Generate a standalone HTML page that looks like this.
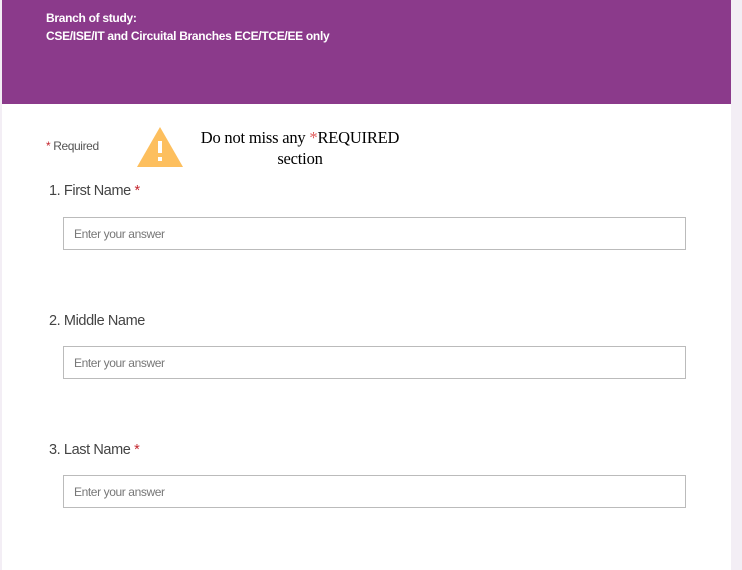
<!DOCTYPE html>
<html><head><style>
body{margin:0;width:742px;height:570px;background:#f3eef5;position:relative;overflow:hidden;font-family:"Liberation Sans",sans-serif}
.card{position:absolute;left:2px;top:0;width:729px;height:570px;background:#fff}
.hdr{position:absolute;left:2px;top:0;width:729px;height:104px;background:#8b3a8b;color:#fff;font-size:12px;font-weight:bold;letter-spacing:-0.3px}
.hdr div{position:absolute;left:44px}
.lbl{position:absolute;left:49px;font-size:14.5px;color:#444;letter-spacing:-0.4px}
.star{color:#c4262e}
.in{position:absolute;left:63px;width:621px;height:31px;border:1px solid #bbb;box-sizing:content-box}
.in span{position:absolute;left:10px;top:9px;font-size:12px;color:#777;letter-spacing:-0.4px}
.note{position:absolute;left:180px;top:127px;width:240px;text-align:center;font-family:"Liberation Serif",serif;font-size:16.5px;line-height:21px;color:#000;letter-spacing:-0.2px}
</style></head><body>
<div class="card"></div>
<div class="hdr"><div style="top:11px">Branch of study:</div><div style="top:29px">CSE/ISE/IT and Circuital Branches ECE/TCE/EE only</div></div>
<div style="position:absolute;left:46px;top:139px;font-size:12px;color:#555;letter-spacing:-0.4px"><span class="star">*</span> Required</div>
<svg style="position:absolute;left:136px;top:126px" width="48" height="42" viewBox="0 0 48 42"><polygon points="24,1 47,41 1,41" fill="#fdbf5e"/><rect x="22" y="15" width="4" height="12" fill="#fff"/><rect x="22" y="31" width="4" height="4" fill="#fff"/></svg>
<div class="note">Do not miss any <span style="color:#e05a5a">*</span>REQUIRED<br>section</div>
<div class="lbl" style="top:183px">1. First Name <span class="star">*</span></div>
<div class="in" style="top:217px"><span>Enter your answer</span></div>
<div class="lbl" style="top:313px">2. Middle Name</div>
<div class="in" style="top:346px"><span>Enter your answer</span></div>
<div class="lbl" style="top:442px">3. Last Name <span class="star">*</span></div>
<div class="in" style="top:475px"><span>Enter your answer</span></div>
</body></html>
